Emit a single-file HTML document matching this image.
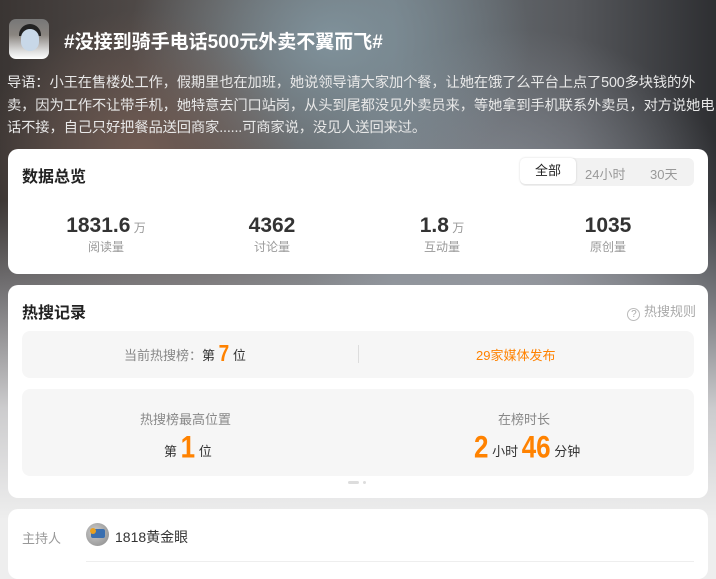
<!DOCTYPE html>
<html><head><meta charset="utf-8"><style>
*{margin:0;padding:0;box-sizing:border-box}
body{width:716px;height:563px;overflow:hidden;font-family:"Liberation Sans","Noto Sans CJK SC",sans-serif;background:#eeeeee;position:relative}
.bg{position:absolute;left:0;top:0;width:716px;height:520px;
background:
radial-gradient(ellipse 160px 140px at 140px 150px,rgba(120,95,85,.8),rgba(120,95,85,0)),
radial-gradient(ellipse 200px 160px at 330px 40px,rgba(130,150,160,.9),rgba(130,150,160,0)),
radial-gradient(ellipse 220px 200px at 520px 230px,rgba(150,155,165,.8),rgba(150,155,165,0)),
linear-gradient(90deg,#3a3533 0%,#5a5452 30%,#6e767c 55%,#56585c 80%,#2e2f32 100%);}
.fade{position:absolute;left:0;top:200px;width:716px;height:320px;background:linear-gradient(180deg,rgba(238,238,238,0),rgba(170,172,178,.55) 30%,rgba(220,220,222,.9) 65%,#eeeeee)}
.av{position:absolute;left:9px;top:19px;width:40px;height:40px;border-radius:7px;overflow:hidden;background:linear-gradient(180deg,#777 0,#8a8580 40%,#ddd 80%,#fff)}
.av .f{position:absolute;left:12px;top:10px;width:18px;height:22px;border-radius:9px;background:#c8d8e8}
.av .h{position:absolute;left:10px;top:5px;width:22px;height:12px;border-radius:11px 11px 0 0;background:#222}
.title{position:absolute;left:64px;top:27px;color:#fff;font-size:19px;font-weight:bold}
.intro{position:absolute;left:7px;top:72px;width:712px;color:#e8e8e8;font-size:14.3px;line-height:22.5px;letter-spacing:-0.15px}
.card{position:absolute;left:8px;width:700px;background:#fff;border-radius:10px}
.h2{position:absolute;left:14px;font-size:16px;font-weight:bold;color:#222}
.tabs{position:absolute;left:512px;top:9px;width:174px;height:28px;background:#f2f2f2;border-radius:6px;font-size:13px;color:#999}
.tabs span{position:absolute;top:6px}
.tabs .on{left:1px;top:1px;width:56px;height:26px;background:#fff;border-radius:5px;color:#222;text-align:center;line-height:26px;box-shadow:0 0 2px rgba(0,0,0,.15)}
.st{position:absolute;top:65px;width:120px;text-align:center}
.st b{font-size:21px;color:#333}
.st i{font-style:normal;font-size:12px;color:#999}
.st div{font-size:12px;color:#999;margin-top:0px}
.box{position:absolute;left:14px;width:672px;background:#f6f6f6;border-radius:8px}
.or{color:#ff8200}
.big{font-family:"Liberation Sans Narrow","Liberation Sans",sans-serif;font-weight:bold;color:#ff8200;display:inline-block;transform:scaleY(1.2)}
</style></head><body>
<div class="bg"></div><div class="fade"></div>
<div class="av"><div class="h"></div><div class="f"></div></div>
<div class="title">#没接到骑手电话500元外卖不翼而飞#</div>
<div class="intro">导语：小王在售楼处工作，假期里也在加班，她说领导请大家加个餐，让她在饿了么平台上点了500多块钱的外卖，因为工作不让带手机，她特意去门口站岗，从头到尾都没见外卖员来，等她拿到手机联系外卖员，对方说她电话不接，自己只好把餐品送回商家......可商家说，没见人送回来过。</div>

<div class="card" style="top:149px;height:125px">
 <div class="h2" style="top:14px">数据总览</div>
 <div class="tabs"><div class="on">全部</div><span style="left:65px">24小时</span><span style="left:130px">30天</span></div>
 <div class="st" style="left:38px"><b>1831.6</b><i> 万</i><div>阅读量</div></div>
 <div class="st" style="left:204px"><b>4362</b><div>讨论量</div></div>
 <div class="st" style="left:374px"><b>1.8</b><i> 万</i><div>互动量</div></div>
 <div class="st" style="left:540px"><b>1035</b><div>原创量</div></div>
</div>

<div class="card" style="top:285px;height:213px">
 <div class="h2" style="top:14px">热搜记录</div>
 <div style="position:absolute;right:12px;top:16px;font-size:13px;color:#aaa"><span style="display:inline-block;width:13px;height:13px;border:1px solid #bbb;border-radius:50%;font-size:10px;text-align:center;line-height:11px;vertical-align:-1px">?</span> 热搜规则</div>
 <div class="box" style="top:46px;height:47px">
  <div style="position:absolute;left:102px;top:13px;font-size:13px;color:#888">当前热搜榜：<span style="color:#333">第 <span class="big" style="font-size:19px">7</span> 位</span></div>
  <div style="position:absolute;left:336px;top:14px;width:1px;height:18px;background:#ddd"></div>
  <div class="or" style="position:absolute;left:454px;top:14px;font-size:13px">29家媒体发布</div>
 </div>
 <div class="box" style="top:104px;height:87px">
  <div style="position:absolute;left:118px;top:20px;font-size:13px;color:#888">热搜榜最高位置</div>
  <div style="position:absolute;left:142px;top:43px;font-size:13px;color:#333">第 <span class="big" style="font-size:26px">1</span> 位</div>
  <div style="position:absolute;left:476px;top:20px;font-size:13px;color:#888">在榜时长</div>
  <div style="position:absolute;left:452px;top:43px;font-size:13px;color:#333"><span class="big" style="font-size:26px">2</span> 小时 <span class="big" style="font-size:26px">46</span> 分钟</div>
 </div>
 <div style="position:absolute;left:340px;top:196px;width:11px;height:3px;border-radius:2px;background:#ddd"></div>
 <div style="position:absolute;left:355px;top:196px;width:3px;height:3px;border-radius:2px;background:#ddd"></div>
</div>

<div class="card" style="top:509px;height:70px">
 <div style="position:absolute;left:14px;top:19px;font-size:13px;color:#999">主持人</div>
 <div style="position:absolute;left:78px;top:14px;width:23px;height:23px;border-radius:50%;background:radial-gradient(circle at 40% 40%,#ccc,#888);"><div style="position:absolute;left:5px;top:6px;width:14px;height:9px;background:#3a6fb0;border-radius:2px"></div><div style="position:absolute;left:4px;top:5px;width:6px;height:6px;background:#e8a020;border-radius:50%"></div></div>
 <div style="position:absolute;left:107px;top:18px;font-size:14px;color:#333">1818黄金眼</div>
 <div style="position:absolute;left:78px;top:52px;width:608px;height:1px;background:#eee"></div>
</div>
</body></html>
